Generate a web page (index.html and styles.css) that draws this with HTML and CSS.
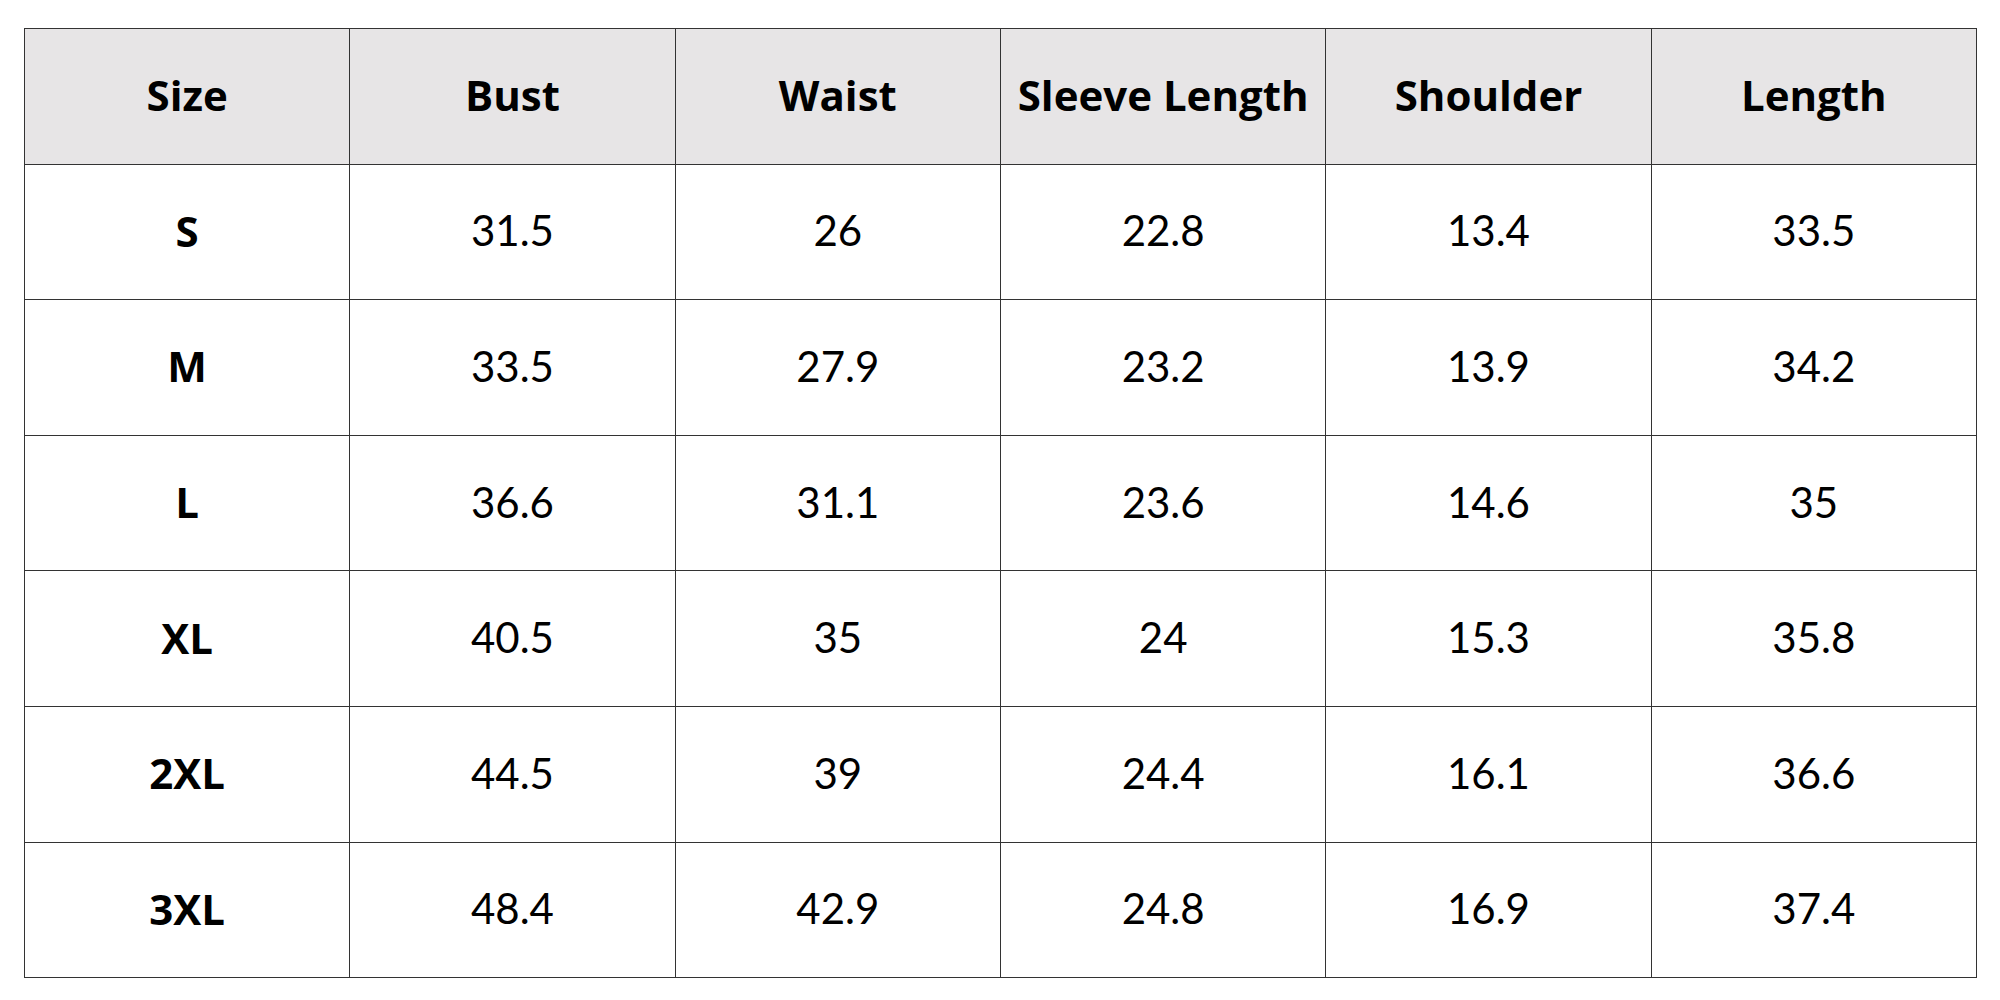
FILE: index.html
```html
<!DOCTYPE html>
<html>
<head>
<meta charset="utf-8">
<link rel="stylesheet" href="styles.css">
</head>
<body>
<table class="chart">
<thead>
<tr><th>Size</th><th>Bust</th><th>Waist</th><th>Sleeve Length</th><th>Shoulder</th><th>Length</th></tr>
</thead>
<tbody>
<tr><th>S</th><td>31.5</td><td>26</td><td>22.8</td><td>13.4</td><td>33.5</td></tr>
<tr><th>M</th><td>33.5</td><td>27.9</td><td>23.2</td><td>13.9</td><td>34.2</td></tr>
<tr><th>L</th><td>36.6</td><td>31.1</td><td>23.6</td><td>14.6</td><td>35</td></tr>
<tr><th>XL</th><td>40.5</td><td>35</td><td>24</td><td>15.3</td><td>35.8</td></tr>
<tr><th>2XL</th><td>44.5</td><td>39</td><td>24.4</td><td>16.1</td><td>36.6</td></tr>
<tr><th>3XL</th><td>48.4</td><td>42.9</td><td>24.8</td><td>16.9</td><td>37.4</td></tr>
</tbody>
</table>
</body>
</html>
```
FILE: styles.css
```css
html, body { margin: 0; padding: 0; background: #fff; }
body { padding: 28px 0 0 24px; }
.chart {
  border-collapse: collapse;
  table-layout: fixed;
  width: 1953px;
  border: 1.5px solid #6e6e6e;
}
.chart tr { height: 135.6px; }
.chart th, .chart td {
  border: 1px solid #333;
  text-align: center;
  vertical-align: middle;
  padding: 0 0 3px 0;
  color: #000;
}
.chart th {
  font-family: "Open Sans", sans-serif;
  font-weight: 700;
  font-size: 42px;
}
.chart td {
  font-family: "Lato", sans-serif;
  font-weight: 400;
  font-size: 42px;
}
.chart thead th { background: #e7e5e6; }
```
